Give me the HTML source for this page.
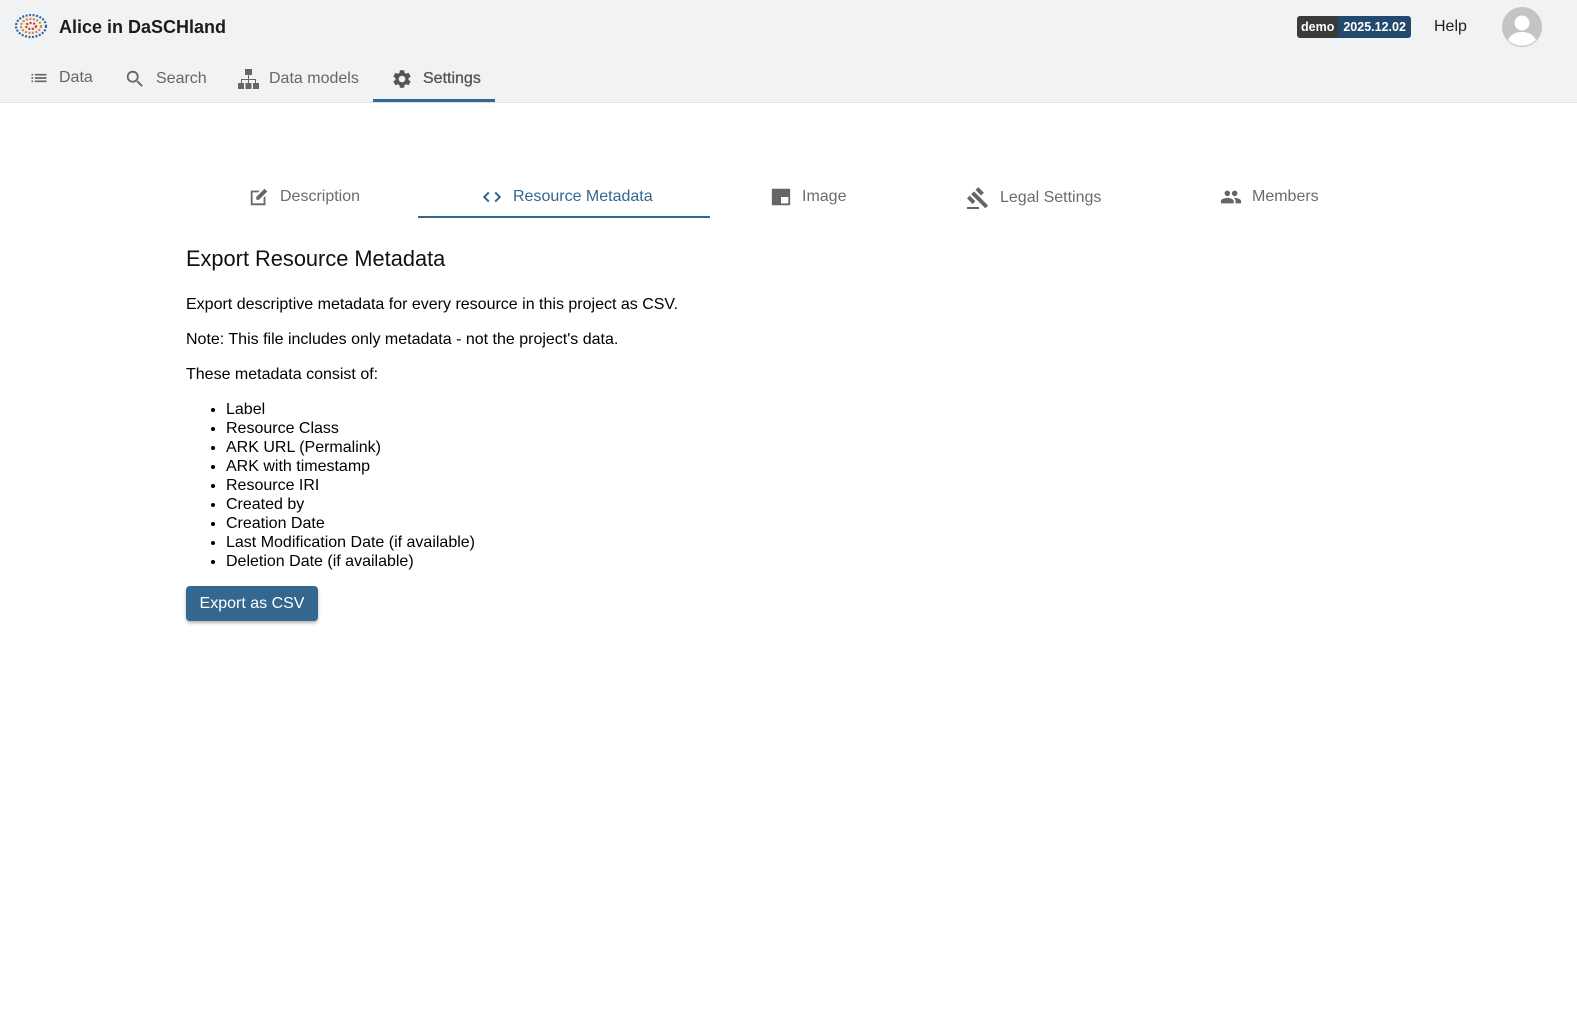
<!DOCTYPE html>
<html><head><meta charset="utf-8"><style>
*{box-sizing:border-box;margin:0;padding:0}
body{width:1577px;height:1025px;background:#fff;font-family:"Liberation Sans",sans-serif;color:#000;position:relative;overflow:hidden}
.hdr{position:absolute;left:0;top:0;width:1577px;height:103px;background:#f1f2f4;border-bottom:1px solid #e2e3e5}
.abs{position:absolute}
.nav{position:absolute;top:68px;font-size:16px;color:#666;display:flex;align-items:center;gap:10px}
.tab{position:absolute;top:186px;font-size:16px;color:#6b6b6b;display:flex;align-items:center;gap:10px}
li{margin-left:40px;font-size:16px;line-height:19px}
p{font-size:16px}
</style></head><body>
<div class="hdr">
 <svg class="abs" style="left:14px;top:12px" width="34" height="28" viewBox="0 0 34 28"><g fill="none" stroke-width="2.2" stroke-dasharray="2 1.5"><ellipse cx="17" cy="14" rx="15" ry="11" stroke="#2a6aa8"/><ellipse cx="17" cy="14" rx="10" ry="7" stroke="#d9823a"/><ellipse cx="17" cy="14" rx="5" ry="3" stroke="#c0392b"/></g></svg>
 <div class="abs" style="left:59px;top:17px;font-size:18px;font-weight:bold;color:#1c1c1c">Alice in DaSCHland</div>
 <div class="abs" style="left:1297px;top:16px;height:22px;border-radius:3px;overflow:hidden;display:flex;font-size:12.5px;font-weight:bold;color:#fff;line-height:22px">
  <span style="background:#3a3a3a;padding:0 4px">demo</span><span style="background:#234a6e;padding:0 5px">2025.12.02</span></div>
 <div class="abs" style="left:1434px;top:18px;font-size:16px;color:#222">Help</div>
 <svg class="abs" style="left:1502px;top:7px" width="40" height="40" viewBox="0 0 40 40"><circle cx="20" cy="20" r="20" fill="#c4c4c4"/><circle cx="20" cy="16" r="7.5" fill="#fff"/><path d="M6 33c3-6 8-8 14-8s11 2 14 8a20 20 0 0 1-28 0z" fill="#fff"/></svg>
 <div class="nav" style="left:29px"><svg width="20" height="20" viewBox="0 0 24 24" fill="#666"><path d="M3 13h2v-2H3v2zm0 4h2v-2H3v2zm0-8h2V7H3v2zm4 4h14v-2H7v2zm0 4h14v-2H7v2zM7 7v2h14V7H7z"/></svg><span>Data</span></div>
 <div class="nav" style="left:124px"><svg width="22" height="22" viewBox="0 0 24 24" fill="#666"><path d="M15.5 14h-.79l-.28-.27A6.47 6.47 0 0 0 16 9.5 6.5 6.5 0 1 0 9.5 16c1.61 0 3.09-.59 4.23-1.57l.27.28v.79l5 4.99L20.49 19l-4.99-5zm-6 0C7.01 14 5 11.99 5 9.5S7.01 5 9.5 5 14 7.01 14 9.5 11.99 14 9.5 14z"/></svg><span>Search</span></div>
 <div class="nav" style="left:238px"><svg width="21" height="22" viewBox="0 0 21 22" fill="#666"><rect x="7" y="1" width="7" height="6"/><rect x="0" y="15" width="6" height="6"/><rect x="7.5" y="15" width="6" height="6"/><rect x="15" y="15" width="6" height="6"/><path d="M10 7h1v4h7v4h-1v-3h-6v3h-1v-3H4v3H3v-4h7z"/></svg><span>Data models</span></div>
 <div class="nav" style="left:391px;color:#555"><svg width="22" height="22" viewBox="0 0 24 24" fill="#555"><path d="M19.14 12.94c.04-.3.06-.61.06-.94 0-.32-.02-.64-.07-.94l2.03-1.580a.49.49 0 0 0 .12-.61l-1.92-3.32a.488.488 0 0 0-.59-.22l-2.39.96c-.5-.38-1.030-.7-1.62-.94l-.36-2.54a.484.484 0 0 0-.48-.41h-3.84c-.24 0-.43.17-.47.41l-.36 2.54c-.59.24-1.13.57-1.62.94l-2.39-.96c-.22-.08-.47 0-.59.22L2.74 8.87c-.12.21-.08.47.12.61l2.03 1.58c-.05.3-.09.63-.09.94s.02.64.07.94l-2.03 1.58a.49.49 0 0 0-.12.61l1.92 3.32c.12.22.37.29.59.22l2.39-.96c.5.38 1.03.7 1.62.94l.36 2.54c.05.24.24.41.48.41h3.84c.24 0 .44-.17.47-.41l.36-2.54c.59-.24 1.13-.56 1.62-.94l2.39.96c.22.08.47 0 .59-.22l1.92-3.32c.12-.22.07-.47-.12-.61l-2.01-1.58zM12 15.6c-1.98 0-3.6-1.62-3.6-3.6s1.62-3.6 3.6-3.6 3.6 1.62 3.6 3.6-1.62 3.6-3.6 3.6z"/></svg><span style="color:#555;-webkit-text-stroke:0.3px #555">Settings</span></div>
 <div class="abs" style="left:373px;top:99px;width:122px;height:3px;background:#336790"></div>
</div>

<div class="tab" style="left:248px"><svg width="22" height="22" viewBox="0 0 24 24" fill="#666"><path d="M3 5h10l-2 2H5v12h12v-6l2-2v10H3z"/><path d="M9 15v-3l9-9 3 3-9 9z"/></svg><span>Description</span></div>
<div class="tab" style="left:481px;color:#336790"><svg width="22" height="22" viewBox="0 0 24 24" fill="none" stroke="#336790" stroke-width="2.2"><path d="M8.5 7l-5 5 5 5M15.5 7l5 5-5 5"/></svg><span>Resource Metadata</span></div>
<div class="abs" style="left:418px;top:216px;width:292px;height:2px;background:#336790"></div>
<div class="tab" style="left:770px"><svg width="22" height="22" viewBox="0 0 24 24" fill="#666"><path d="M2 3h20v18H2z"/><rect x="12" y="12" width="8" height="7" fill="#fff"/></svg><span>Image</span></div>
<div class="tab" style="left:966px"><svg width="24" height="24" viewBox="0 0 24 24" fill="#666"><path d="M1 21h12v2H1z"/><path d="M5.2 8.2l2.8-2.8 14.1 14.1-2.8 2.8z"/><path d="M12.3 1.1l5.6 5.6-2.8 2.8-5.6-5.6zM3.8 9.6l5.6 5.6-2.8 2.8L1 12.4z"/></svg><span>Legal Settings</span></div>
<div class="tab" style="left:1220px"><svg width="22" height="22" viewBox="0 0 24 24" fill="#666"><path d="M16 11c1.66 0 2.99-1.34 2.99-3S17.66 5 16 5c-1.660 0-3 1.34-3 3s1.34 3 3 3zm-8 0c1.66 0 2.99-1.34 2.99-3S9.66 5 8 5C6.34 5 5 6.34 5 8s1.34 3 3 3zm0 2c-2.33 0-7 1.17-7 3.5V19h14v-2.5c0-2.33-4.67-3.5-7-3.5zm8 0c-.29 0-.62.02-.97.05 1.16.84 1.97 1.97 1.97 3.45V19h6v-2.5c0-2.33-4.67-3.5-7-3.5z"/></svg><span>Members</span></div>

<div class="abs" style="left:186px;top:246px;font-size:21.8px;color:#111">Export Resource Metadata</div>
<p class="abs" style="left:186px;top:296px">Export descriptive metadata for every resource in this project as CSV.</p>
<p class="abs" style="left:186px;top:331px">Note: This file includes only metadata - not the project's data.</p>
<p class="abs" style="left:186px;top:366px">These metadata consist of:</p>
<ul class="abs" style="left:186px;top:400px">
<li>Label</li><li>Resource Class</li><li>ARK URL (Permalink)</li><li>ARK with timestamp</li><li>Resource IRI</li><li>Created by</li><li>Creation Date</li><li>Last Modification Date (if available)</li><li>Deletion Date (if available)</li>
</ul>
<div class="abs" style="left:186px;top:586px;width:132px;height:35px;background:#336790;border-radius:4px;color:#fff;font-size:16px;line-height:35px;text-align:center;box-shadow:0 2px 3px rgba(0,0,0,.3)">Export as CSV</div>
</body></html>
